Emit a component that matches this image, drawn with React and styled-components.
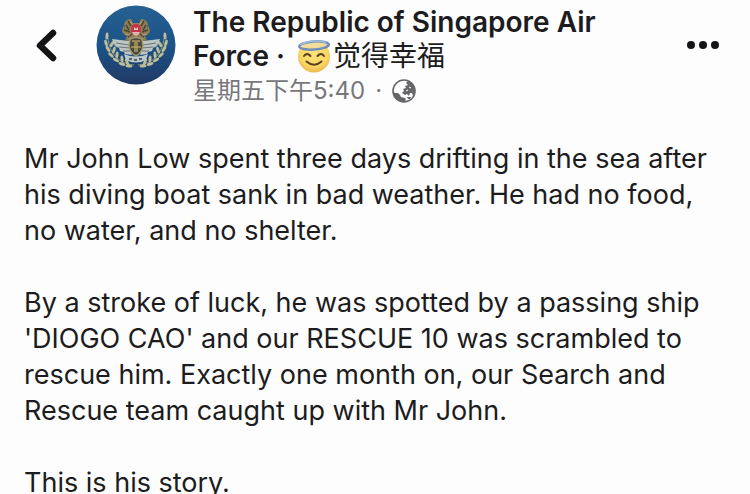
import React from 'react';
import styled, { createGlobalStyle } from 'styled-components';

const GlobalStyle = createGlobalStyle`
    html {
        scrollbar-width: none;
    }
    body {
        margin: 0;
        background-color: #fdfdfe;
        color: #1c1c20;
        font-family: Inter, 'Noto Sans CJK SC', sans-serif;
    }
`

const StyledPost = styled.article`
    padding: 5px 24px 0;
`

const StyledHeader = styled.header`
    display: flex;
    align-items: flex-start;
`

const IconButton = styled.button`
    display: flex;
    align-items: center;
    justify-content: center;
    flex: none;
    width: 44px;
    height: 80px;
    padding: 0;
    border: 0;
    background: none;
    color: #141416;
    cursor: pointer;
`

const Avatar = styled.a`
    display: block;
    flex: none;
    width: 80px;
    height: 80px;
    margin: 0 17px 0 28px;
`

const HeaderText = styled.div`
    flex: 1;
    min-width: 0;
`

const Title = styled.h1`
    max-width: 440px;
    margin: 0;
    font-size: 28px;
    line-height: 34px;
    font-weight: 600;
    a {
        color: inherit;
        text-decoration: none;
    }
`

const Feeling = styled.span`
    font-weight: 400;
    white-space: nowrap;
    svg {
        margin: 0 2px 0 5px;
        vertical-align: -7px;
    }
`

const Meta = styled.div`
    display: flex;
    align-items: center;
    gap: 10px;
    font-size: 24px;
    line-height: 36px;
    color: #77777b;
`

const Body = styled.div`
    margin-top: 32px;
    font-size: 27px;
    line-height: 36px;
    p {
        margin: 0 0 36px;
    }
`

const BackIcon = () => (
    <svg width="44" height="44" viewBox="0 0 44 44" fill="none" aria-hidden="true">
        <path d="M29 10 L16 22.5 L29 35" stroke="currentColor" strokeWidth="6.5" strokeLinecap="round" strokeLinejoin="round" />
    </svg>
)

const MoreIcon = () => (
    <svg width="34" height="10" viewBox="0 0 34 10" fill="currentColor" aria-hidden="true">
        <circle cx="4" cy="5" r="4" />
        <circle cx="16" cy="5" r="4" />
        <circle cx="28" cy="5" r="4" />
    </svg>
)

//leaves of the left branch as [x, y, angle], mirrored for the right one
const leaves = [
    [11, 31, 4], [10, 38, -16], [16, 39, 28], [12, 44, -30], [18, 45, 18],
    [15, 50, -44], [21, 50, 6], [20, 55, -58], [26, 54, -6],
    [26, 59, -72], [31, 57, -24], [33, 61, -84],
]

const Branch = () => (
    <g>
        <path d="M12 33 C13 47 22 59 38 60" stroke="#8d9275" strokeWidth="1" fill="none" />
        {leaves.map(([x, y, angle]) => (
            <ellipse key={`${x}-${y}`} cx={x} cy={y} rx="1.5" ry="3.5" fill="#bfbd98" transform={`rotate(${angle} ${x} ${y})`} />
        ))}
    </g>
)

const Crest = () => (
    <svg width="80" height="80" viewBox="0 0 80 80" aria-hidden="true">
        <defs>
            <linearGradient id="crestSky" x1="0" y1="0" x2="0" y2="1">
                <stop offset="0" stopColor="#266091" />
                <stop offset="0.5" stopColor="#1c5388" />
                <stop offset="1" stopColor="#213964" />
            </linearGradient>
        </defs>
        <circle cx="40" cy="40" r="39.5" fill="url(#crestSky)" />
        <Branch />
        <g transform="translate(80 0) scale(-1 1)">
            <Branch />
        </g>
        {/* wings */}
        <path d="M16 34 L33 36 L36 50 L29 49 L28 47 L24 46 L23 43 L19 41 Z" fill="#bcc5c2" />
        <path d="M64 34 L47 36 L44 50 L51 49 L52 47 L56 46 L57 43 L61 41 Z" fill="#bcc5c2" />
        <path d="M20 38 L33 40 M23 42 L34 43 M27 46 L34 46 M60 38 L47 40 M57 42 L46 43 M53 46 L46 46" stroke="#68777a" strokeWidth="1" />
        {/* lions around the shield */}
        <path d="M35 14 C29 14 27 19 29 23 L27 21 L26 27 L29 30 L31 31 L29 36 L51 36 L49 31 L51 30 L54 27 L53 21 L51 23 C53 19 51 14 45 14 L43 18 L37 18 Z" fill="#8d7d58" />
        <path d="M32 16 L35 21 M48 16 L45 21 M30 20 L33 25 M50 20 L47 25 M28 25 L34 27 M52 25 L46 27 M32 32 L36 29 M48 32 L44 29" stroke="#4b4535" strokeWidth="1.5" />
        <path d="M34 17 L37 20 M46 17 L43 20 M29 29 L34 30 M51 29 L46 30" stroke="#b9a26b" strokeWidth="1" />
        <path d="M36 20 Q40 18 44 20 L45 26 Q44 30 40 31 Q36 30 35 26 Z" fill="#c93546" />
        <path d="M36 27 L44 27 Q43 30 40 31 Q37 30 36 27 Z" fill="#d9b8ac" />
        <path d="M38 22 L40 24 L42 22 L42 25 L38 25 Z" fill="#ecd3cb" />
        {/* emblem */}
        <path d="M34 34 Q40 31 46 34 L47 41 Q46 48 40 51 Q34 48 33 41 Z" fill="#4a4c3d" stroke="#a39b76" strokeWidth="1.5" />
        <path d="M36 36 H39 V47 M44 36 H41 V47 M35 42 H45" stroke="#b39c5c" strokeWidth="1.5" fill="none" />
        {/* ribbon */}
        <path d="M28 49 Q40 54 52 49 L50 55 Q40 60 30 55 Z" fill="#bcc7c9" />
        <path d="M33 54 H36 M38 55 H41 M43 54 H46" stroke="#53616d" strokeWidth="2" />
    </svg>
)

const HaloFace = () => (
    <svg width="34" height="34" viewBox="0 0 34 34" fill="none" role="img" aria-label="smiling face with halo">
        <defs>
            <radialGradient id="face" cx="0.5" cy="0.4" r="0.6">
                <stop offset="0" stopColor="#fde37c" />
                <stop offset="0.7" stopColor="#fad764" />
                <stop offset="1" stopColor="#e9b84e" />
            </radialGradient>
        </defs>
        <circle cx="17" cy="17.5" r="16" fill="url(#face)" />
        <g transform="rotate(-4 17 6)">
            <ellipse cx="17" cy="6.5" rx="14.8" ry="4" fill="#f2de9a" stroke="#6f8fba" strokeWidth="2.5" />
            <path d="M4 4.5 Q16 0 29 4" stroke="#a2bddb" strokeWidth="1.5" strokeLinecap="round" />
        </g>
        <path d="M7 17 Q10 13 13.5 17 M20.5 17 Q24 13 27 17" stroke="#5a3f1e" strokeWidth="2" strokeLinecap="round" />
        <path d="M9.5 22.5 Q17 29 24.5 22.5" stroke="#5a3f1e" strokeWidth="2" strokeLinecap="round" />
    </svg>
)

const GlobeIcon = () => (
    <svg width="24" height="24" viewBox="0 0 24 24" fill="none" role="img" aria-label="Public">
        <circle cx="12" cy="12" r="11" stroke="#67676b" strokeWidth="1.6" />
        <path d="M1 13 L3 14 L6 14 L8 16 L9 18 L13 19 L14 21 L12 23 C6 23 1 19 1 13 Z" fill="#67676b" />
        <path d="M16 2 C21 4 23 8 23 13 L21 17 L20 14 L18 14 L17 17 L15 15 L13 16 L10 14 L12 12 L11 10 L14 9 L13 7 L16 6 L14 4 Z" fill="#67676b" />
        <path d="M17 8 L19 9 M14 12 L16 11" stroke="#fdfdfe" strokeWidth="1" />
        <path d="M15 18 L19 18 L18 20 L16 20 Z" fill="#67676b" />
    </svg>
)

const PostHeader = () => {
    return (
        <StyledHeader>
            <IconButton type="button" aria-label="Back">
                <BackIcon />
            </IconButton>
            <Avatar href="#profile" aria-label="The Republic of Singapore Air Force">
                <Crest />
            </Avatar>
            <HeaderText>
                <Title>
                    <a href="#profile">The Republic of Singapore Air Force</a> ·{' '}
                    <Feeling><HaloFace />觉得幸福</Feeling>
                </Title>
                <Meta>
                    <span>星期五下午5:40</span>
                    <span>·</span>
                    <GlobeIcon />
                </Meta>
            </HeaderText>
            <IconButton type="button" aria-label="More options">
                <MoreIcon />
            </IconButton>
        </StyledHeader>
    )
}

const App = () => {
    return (
        <>
            <GlobalStyle />
            <StyledPost>
                <PostHeader />
                <Body>
                    <p>
                        Mr John Low spent three days drifting in the sea after his diving boat
                        sank in bad weather. He had no food, no water, and no shelter.
                    </p>
                    <p>
                        By a stroke of luck, he was spotted by a passing ship 'DIOGO CAO' and our
                        RESCUE 10 was scrambled to rescue him. Exactly one month on, our Search
                        and Rescue team caught up with Mr John.
                    </p>
                    <p>This is his story.</p>
                </Body>
            </StyledPost>
        </>
    )
}

export default App;
